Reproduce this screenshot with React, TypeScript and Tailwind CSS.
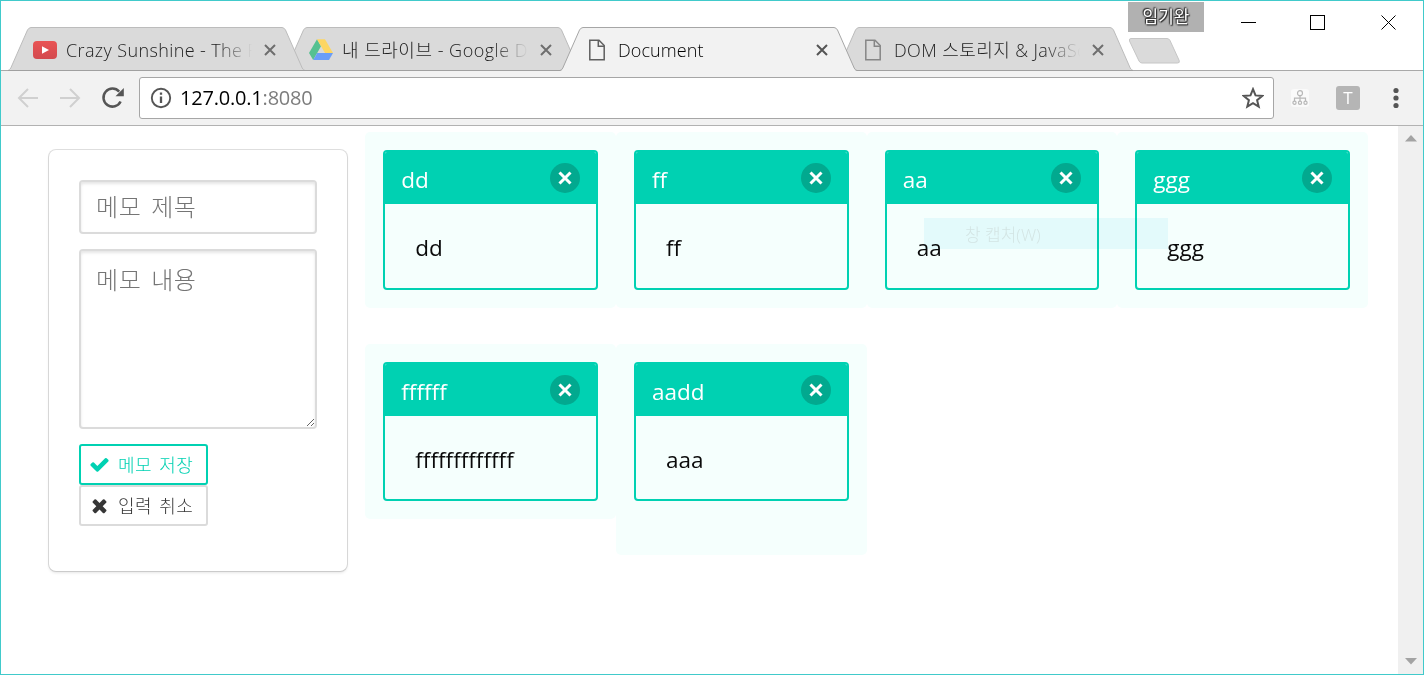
import React from "react";

const CHECK =
  "M1671 566q0 40-28 68l-724 724-136 136q-28 28-68 28t-68-28l-136-136-362-362q-28-28-28-68t28-68l136-136q28-28 68-28t68 28l294 295 656-657q28-28 68-28t68 28l136 136q28 28 28 68z";
const TIMES =
  "M1490 1322q0 40-28 68l-136 136q-28 28-68 28t-68-28l-294-294-294 294q-28 28-68 28t-68-28l-136-136q-28-28-28-68t28-68l294-294-294-294q-28-28-28-68t28-68l136-136q28-28 68-28t68 28l294 294 294-294q28-28 68-28t68 28l136 136q28 28 28 68t-28 68l-294 294 294 294q28 28 28 68z";

function YoutubeIcon() {
  return (
    <svg width="24" height="24" viewBox="0 0 24 24">
      <defs>
        <linearGradient id="yt" x1="0" y1="0" x2="0" y2="1">
          <stop offset="0" stopColor="#e95454" />
          <stop offset="1" stopColor="#d34a4f" />
        </linearGradient>
      </defs>
      <rect x="0" y="3" width="24" height="18" rx="4" fill="url(#yt)" />
      <path d="M9 8.2L16 12l-7 3.8z" fill="#fff" />
    </svg>
  );
}

function DriveIcon() {
  return (
    <svg width="24" height="24" viewBox="0 0 24 24">
      <path d="M8 1.2L12 8.2 4.2 22 0 15z" fill="#55c191" />
      <path d="M8 1.2h8L24 15h-8z" fill="#fdd663" />
      <path d="M8.2 15H24l-4 7H4.2z" fill="#6a9df8" />
    </svg>
  );
}

function PageIcon({ color }: { color: string }) {
  return (
    <svg width="24" height="24" viewBox="0 0 24 24" fill="none" stroke={color} strokeWidth="1.5">
      <path d="M4.8 2.3h9.2l5.2 5.2v14.2H4.8z" />
      <path d="M13.3 2.3v6h5.9" />
    </svg>
  );
}

interface TabData {
  title: string;
  icon: React.ReactNode;
  active?: boolean;
  order: string;
  text: string;
}

const tabs: TabData[] = [
  { title: "Crazy Sunshine - The Fool", icon: <YoutubeIcon />, order: "z-[3]", text: "tracking-[0.38px]" },
  { title: "내 드라이브 - Google Drive", icon: <DriveIcon />, order: "z-[2]", text: "tracking-[0.5px]" },
  { title: "Document", icon: <PageIcon color="#5f5f5f" />, active: true, order: "z-[4]", text: "tracking-[0.1px]" },
  { title: "DOM 스토리지 & JavaScript", icon: <PageIcon color="#868686" />, order: "z-[2]", text: "tracking-[0.4px]" },
];

function Tab({ tab }: { tab: TabData }) {
  const fade = tab.active
    ? ""
    : "[mask-image:linear-gradient(to_right,#000_150px,transparent_186px)]";
  return (
    <div className={`relative -mr-[21px] h-[44px] w-[297px] shrink-0 ${tab.order}`}>
      <svg className="absolute inset-0" width="297" height="44" viewBox="0 0 297 44">
        <path
          d="M0 44 L2 43 L19.5 3 Q21 .5 23 .5 H274 Q276 .5 277.5 3 L295 43 L297 44z"
          fill={tab.active ? "#f2f2f2" : "#dadada"}
        />
        <path
          d="M0 43.5 Q1.8 43 2.8 41 L19.5 3 Q21 .5 23 .5 H274 Q276 .5 277.5 3 L294.2 41 Q295.2 43 297 43.5"
          fill="none"
          stroke={tab.active ? "#a6a6a6" : "#bcbcbc"}
        />
        {tab.active ? null : <path d="M0 43.5H297" stroke="#a0a0a0" />}
      </svg>
      <div className="relative flex h-full items-center pl-[25px]">
        <span className="mt-px flex w-[33px] shrink-0">{tab.icon}</span>
        <span
          className={`mt-px w-[188px] shrink-0 overflow-hidden text-[18px] leading-[28px] font-light whitespace-nowrap ${tab.text} ${fade} ${tab.active ? "text-black" : "text-[#222]"}`}
        >
          {tab.title}
        </span>
        <svg className="mt-px ml-[10px] shrink-0" width="12" height="12" viewBox="0 0 12 12">
          <path d="M1 1l10 10M11 1L1 11" stroke={tab.active ? "#555" : "#6e6e6e"} strokeWidth="2" />
        </svg>
      </div>
    </div>
  );
}

function TitleBar() {
  return (
    <div className="flex h-[70px] items-start bg-white shadow-[inset_0_-1px_0_#a9a9a9]">
      <div className="flex h-full items-end pl-[7px]">
        {tabs.map((t) => (
          <Tab key={t.title} tab={t} />
        ))}
      </div>
      <div className="ml-[16px] flex w-[76px] flex-col pt-px">
        <div className="flex h-[30px] items-center justify-center bg-[#b1b1b1] text-[17px] leading-[20px] text-white [text-shadow:0_0_2px_#222,0_0_2px_#222,1px_1px_1px_#333,-1px_-1px_1px_#444]">
          임기완
        </div>
        <svg className="mt-[6px]" width="53" height="26" viewBox="0 0 53 26">
          <path
            d="M3 .5H39Q41 .5 42 2.5L51.2 22.5Q52 25 49.500 25H14Q12 25 11 23L1.500 3Q.8 .5 3 .5z"
            fill="#dadada"
            stroke="#c6c6c6"
          />
        </svg>
      </div>
      <svg className="mt-[13px] ml-[36px]" width="158" height="18" viewBox="0 0 158 18" fill="none" stroke="#000">
        <path d="M1 8.500H16" />
        <rect x="70.500" y="1.500" width="14" height="14" />
        <path d="M141.500 1.500l14 14M155.500 1.500l-14 14" />
      </svg>
    </div>
  );
}

function Toolbar() {
  return (
    <div className="flex h-[55px] items-center border-b border-[#b2b2b2] bg-[#f2f2f2] pl-[16px]">
      <svg className="shrink-0" width="66" height="22" viewBox="0 0 66 22" fill="none" stroke="#d0d0d0" strokeWidth="2">
        <path d="M21 11H3M11 2L2 11l9 9" />
        <path d="M43 11H61M53 2l9 9-9 9" />
      </svg>
      <svg className="ml-[18px] shrink-0" width="24" height="24" viewBox="0 0 24 24">
        <path d="M19.600 15.500A9 9 0 1 1 18.200 5.600" fill="none" stroke="#555" strokeWidth="2.500" />
        <path d="M22.800 2v8.300h-8.300z" fill="#555" />
      </svg>
      <div className="ml-[14px] flex h-[42px] w-[1135px] shrink-0 items-center rounded-[3px] border border-[#a6a6a6] bg-white pl-[10px]">
        <svg width="22" height="22" viewBox="0 0 22 22">
          <circle cx="11" cy="11" r="9.200" fill="none" stroke="#555" strokeWidth="1.900" />
          <path d="M11 9.500v6.500M11 5.500v2.300" stroke="#555" strokeWidth="2.300" />
        </svg>
        <span className="ml-[8px] text-[20px] leading-[28px] tracking-[-0.2px] text-black">
          127.0.0.1<span className="text-[#7c7c7c]">:8080</span>
        </span>
        <svg className="mr-[9px] ml-auto" width="22" height="22" viewBox="0 0 22 22">
          <path
            d="M11 2.200l2.500 6.200 6.700.5-5.100 4.300 1.600 6.500L11 16.100l-5.700 3.600 1.600-6.500L1.800 8.900l6.700-.5z"
            fill="none"
            stroke="#555"
            strokeWidth="2"
          />
        </svg>
      </div>
      <div className="ml-[17px] flex h-[18px] w-[18px] items-center justify-center rounded-[3px] bg-[#fafafa]">
        <svg width="16" height="16" viewBox="0 0 16 16" fill="none" stroke="#b8b8b8" strokeWidth="1.200">
          <circle cx="8" cy="3.200" r="2.500" />
          <path d="M8 5.700V11M2.500 11V8.200h11V11" />
          <circle cx="2.500" cy="12.800" r="1.600" />
          <circle cx="8" cy="12.800" r="1.600" />
          <circle cx="13.500" cy="12.800" r="1.600" />
        </svg>
      </div>
      <div className="ml-[27px] flex h-6 w-6 items-center justify-center rounded-[3px] bg-[#b5b5b5] text-[17px] leading-6 text-white">
        T
      </div>
      <svg className="ml-[33px]" width="6" height="22" viewBox="0 0 6 22" fill="#555">
        <circle cx="3" cy="3.500" r="2.600" />
        <circle cx="3" cy="11" r="2.600" />
        <circle cx="3" cy="18.500" r="2.600" />
      </svg>
    </div>
  );
}

function MemoForm() {
  return (
    <form className="mt-[24px] ml-[48px] h-[421px] w-[298px] shrink-0 rounded-[7px] bg-white px-[30px] pt-[30px] shadow-[0_2px_3px_rgba(10,10,10,0.1),0_0_0_1px_rgba(10,10,10,0.13)]">
      <input
        placeholder="메모 제목"
        className="block h-[54px] w-[238px] rounded-[4px] border-2 border-[#dbdbdb] px-[15px] pb-[2px] text-[24px] font-light tracking-[0.6px] shadow-[inset_0_2px_3px_rgba(10,10,10,0.1)] [word-spacing:3px] placeholder:text-[#757575]"
      />
      <textarea
        placeholder="메모 내용"
        className="mt-[15px] block h-[180px] w-[238px] resize rounded-[4px] border-2 border-[#dbdbdb] px-[15px] pt-[12px] text-[24px] leading-[34px] font-light tracking-[0.6px] shadow-[inset_0_2px_3px_rgba(10,10,10,0.1)] [word-spacing:3px] placeholder:text-[#757575]"
      />
      <button
        type="button"
        className="mt-[15px] flex h-[41px] w-[129px] items-center rounded-[3px] border-2 border-[#00d1b2] pl-[8px] text-[18px] font-light whitespace-nowrap text-[#00d1b2] [word-spacing:2px]"
      >
        <svg width="21" height="21" viewBox="0 0 1792 1792" fill="currentColor">
          <path d={CHECK} />
        </svg>
        <span className="ml-[8px] leading-[26px] tracking-[0.5px]">메모 저장</span>
      </button>
      <button
        type="button"
        className="flex h-[41px] w-[129px] items-center rounded-[3px] border-2 border-[#dbdbdb] pl-[8px] text-[18px] font-light whitespace-nowrap text-[#363636] [word-spacing:2px]"
      >
        <svg width="21" height="21" viewBox="0 0 1792 1792" fill="currentColor">
          <path d={TIMES} />
        </svg>
        <span className="ml-[8px] leading-[26px] tracking-[0.5px]">입력 취소</span>
      </button>
    </form>
  );
}

interface Memo {
  title: string;
  body: string;
  tile: string;
  card: string;
}

const memos: Memo[] = [
  { title: "dd", body: "dd", tile: "h-[176px]", card: "h-[140px]" },
  { title: "ff", body: "ff", tile: "h-[176px]", card: "h-[140px]" },
  { title: "aa", body: "aa", tile: "h-[176px]", card: "h-[140px]" },
  { title: "ggg", body: "ggg", tile: "h-[176px]", card: "h-[140px]" },
  { title: "ffffff", body: "fffffffffffff", tile: "h-[175px]", card: "h-[139px]" },
  { title: "aadd", body: "aaa", tile: "h-[211px]", card: "h-[139px]" },
];

function MemoTile({ memo }: { memo: Memo }) {
  return (
    <div className={`rounded-[5px] bg-[#f5fffd] p-[18px] ${memo.tile}`}>
      <article className={`overflow-hidden rounded-[4px] border-2 border-[#00d1b2] ${memo.card}`}>
        <header className="flex h-[52px] items-center justify-between bg-[#00d1b2] pr-[16px] pl-[16px] text-white">
          <span className="mt-[4px] text-[22.5px] leading-[32px]">{memo.title}</span>
          <span className="flex h-[30px] w-[30px] items-center justify-center rounded-full bg-[#02a98f]">
            <svg width="14" height="14" viewBox="0 0 14 14" stroke="#fff" strokeWidth="3">
              <path d="M1.500 1.500l11 11M12.500 1.500l-11 11" />
            </svg>
          </span>
        </header>
        <p className="pt-[28px] pl-[30px] text-[22.5px] leading-[32px] text-[#0a0a0a]">{memo.body}</p>
      </article>
    </div>
  );
}

export default function App() {
  return (
    <div className="flex h-[675px] w-[1424px] flex-col overflow-hidden border border-[#41cacb] bg-white font-['Open_Sans','Noto_Sans_CJK_KR',sans-serif] [font-variant-ligatures:none]">
      <TitleBar />
      <Toolbar />
      <main className="relative flex min-h-0 flex-1">
        <MemoForm />
        <section className="ml-[18.3px] grid w-[1002.7px] shrink-0 grid-cols-4 content-start items-start gap-y-[36px] pt-[6px]">
          {memos.map((m) => (
            <MemoTile key={m.title} memo={m} />
          ))}
        </section>
        <div className="absolute top-[92px] left-[923px] flex h-[31px] w-[244px] items-center bg-[#e9f9fd]/80 pl-[41px] text-[17px] font-light text-[#dce5e6] mix-blend-multiply">
          <span className="mt-[2px] leading-[26px] whitespace-nowrap">창 캡처(W)</span>
        </div>
        <div className="ml-auto flex w-[25px] shrink-0 flex-col items-center justify-between bg-[#f0f0f0] pt-[9px] pb-[9px]">
          <svg width="12" height="7" viewBox="0 0 12 7" fill="#a3a3a3">
            <path d="M6 0l6 6.500H0z" />
          </svg>
          <svg width="12" height="7" viewBox="0 0 12 7" fill="#a3a3a3">
            <path d="M6 6.500L0 0h12z" />
          </svg>
        </div>
      </main>
    </div>
  );
}
